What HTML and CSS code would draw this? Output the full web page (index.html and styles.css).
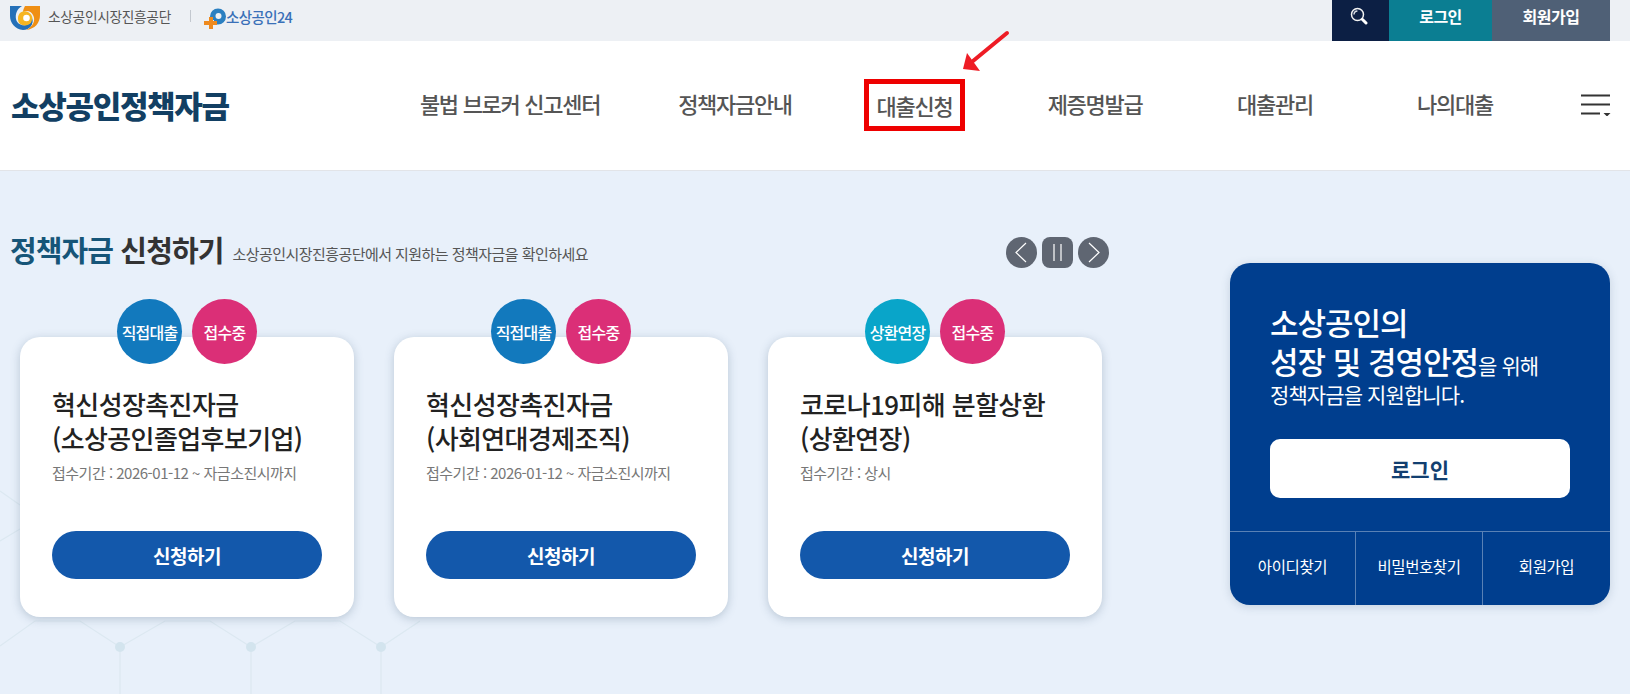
FILE: index.html
```html
<!DOCTYPE html>
<html lang="ko">
<head>
<meta charset="utf-8">
<title>소상공인정책자금</title>
<link rel="stylesheet" href="styles.css">
</head>
<body>
<div class="topbar">
  <div class="org">
    <svg class="kosme" viewBox="0 0 30 24" width="30" height="24">
      <path d="M0 0H12C7 3 5 8 6 13C7 18 12 20 16 19C20 18 22 15 22 12C24 18 20 24 13 24C5 23 0 17 0 10Z" fill="#2470b8"/>
      <path d="M15 0H30V9C30 17 25 23 16 24C23 21 26 14 23 9C21 5 17 4 13 6C13 4 14 2 15 0Z" fill="#ef8f14"/>
      <path d="M8 12C8 7 13 4 18 6C22 8 24 13 21 17C18 20 13 20 10 18C8 16 8 14 8 12Z" fill="#f6b521"/>
      <path d="M14 20C18 21 22 18 22 13C23 16 22 20 18 22C16 23 14 22 14 20Z" fill="#2470b8"/>
      <circle cx="16.500" cy="12" r="3.300" fill="#fff"/>
    </svg>
    <span class="org-name">소상공인시장진흥공단</span>
    <span class="org-sep"></span>
    <svg class="p24" viewBox="0 0 22 22" width="22" height="22">
      <path d="M6 10V8.500A8 8 0 1 1 14 16.500H10V12H6Z" fill="#2a7fc1"/>
      <circle cx="14.500" cy="8" r="3" fill="#edf0f4"/>
      <path d="M5 9h4v4h4v4H9v4H5v-4H0v-4h5z" fill="#ee8a1e"/>
    </svg>
    <span class="p24-name">소상공인24</span>
  </div>
  <div class="util">
    <a class="util-search">
      <svg viewBox="0 0 18 18" width="18" height="18">
        <circle cx="7.500" cy="7.500" r="6" fill="none" stroke="#f2f2f2" stroke-width="1.500"/>
        <path d="M12.500 12.500l3.500 3.500" stroke="#fff" stroke-width="3" stroke-linecap="round"/>
        <path d="M4 7.500a3.600 3.600 0 0 1 3.400-3.500" fill="none" stroke="#d8dce4" stroke-width="1.500"/>
      </svg>
    </a>
    <a class="util-login">로그인</a>
    <a class="util-join">회원가입</a>
  </div>
</div>

<header class="header">
  <div class="brand">소상공인정책자금</div>
  <nav class="gnb">
    <a class="gnb-item gnb-wide">불법 브로커 신고센터</a>
    <a class="gnb-item gnb-mid">정책자금안내</a>
    <a class="gnb-item gnb-mark"><span class="hl">대출신청</span></a>
    <a class="gnb-item">제증명발급</a>
    <a class="gnb-item">대출관리</a>
    <a class="gnb-item">나의대출</a>
  </nav>
  <svg class="burger" viewBox="0 0 30 22" width="30" height="22">
    <path d="M0 1.500H29M0 10.500H29M0 19.500H19" stroke="#333" stroke-width="2" fill="none"/>
    <path d="M22.500 19h7l-3.500 3.500z" fill="#333"/>
  </svg>
  <svg class="arrow" viewBox="0 0 60 50" width="60" height="50">
    <path d="M52 3L18 31" stroke="#ee1c25" stroke-width="4" stroke-linecap="round"/>
    <path d="M8 39L12 23L25 41Z" fill="#ee1c25"/>
  </svg>
</header>

<main class="main">
  <svg class="pattern" viewBox="0 0 420 223" width="420" height="223">
    <g fill="none" stroke="#dce8f1" stroke-width="1.200">
      <path d="M0 175L35 150H80L120 176L165 150H210L251 176L295 150H340L381 176L420 150"/>
      <path d="M120 176V223M251 176V223M381 176V223"/>
      <path d="M0 20L20 34M0 70L20 58"/>
    </g>
    <g fill="#d3e4ee">
      <circle cx="120" cy="176" r="5"/><circle cx="251" cy="176" r="5"/><circle cx="381" cy="176" r="5"/>
    </g>
  </svg>
  <section class="funds">
    <div class="funds-head">
      <h2 class="funds-title"><span class="accent">정책자금</span> 신청하기</h2>
      <p class="funds-sub">소상공인시장진흥공단에서 지원하는 정책자금을 확인하세요</p>
      <div class="controls">
        <button class="ctl ctl-round"><svg viewBox="0 0 31 31" width="31" height="31"><path d="M20 6L10 15.500L20 25" fill="none" stroke="#fff" stroke-width="1.200"/></svg></button>
        <button class="ctl ctl-square"><svg viewBox="0 0 31 31" width="31" height="31"><path d="M12 7V24M19 7V24" fill="none" stroke="#fff" stroke-width="1.200"/></svg></button>
        <button class="ctl ctl-round"><svg viewBox="0 0 31 31" width="31" height="31"><path d="M11 6L21 15.500L11 25" fill="none" stroke="#fff" stroke-width="1.200"/></svg></button>
      </div>
    </div>
    <div class="cards">
      <article class="card">
        <div class="badges"><span class="badge badge-direct">직접대출</span><span class="badge badge-open">접수중</span></div>
        <h3 class="card-title">혁신성장촉진자금<br>(소상공인졸업후보기업)</h3>
        <p class="card-date">접수기간 : 2026-01-12 ~ 자금소진시까지</p>
        <a class="card-btn">신청하기</a>
      </article>
      <article class="card">
        <div class="badges"><span class="badge badge-direct">직접대출</span><span class="badge badge-open">접수중</span></div>
        <h3 class="card-title">혁신성장촉진자금<br>(사회연대경제조직)</h3>
        <p class="card-date">접수기간 : 2026-01-12 ~ 자금소진시까지</p>
        <a class="card-btn">신청하기</a>
      </article>
      <article class="card">
        <div class="badges"><span class="badge badge-repay">상환연장</span><span class="badge badge-open">접수중</span></div>
        <h3 class="card-title">코로나19피해 분할상환<br>(상환연장)</h3>
        <p class="card-date">접수기간 : 상시</p>
        <a class="card-btn">신청하기</a>
      </article>
    </div>
  </section>
  <aside class="panel">
    <div class="panel-body">
      <p class="panel-text">
        <span class="panel-l1">소상공인의</span>
        <span class="panel-l2"><strong>성장 및 경영안정</strong>을 위해</span>
        <span class="panel-l3">정책자금을 지원합니다.</span>
      </p>
      <a class="panel-login">로그인</a>
    </div>
    <div class="panel-links">
      <a class="panel-link">아이디찾기</a>
      <a class="panel-link">비밀번호찾기</a>
      <a class="panel-link">회원가입</a>
    </div>
  </aside>
</main>
</body>
</html>
```

FILE: styles.css
```css
* { box-sizing: border-box; }
html, body { margin: 0; padding: 0; }
body {
  width: 1630px;
  height: 694px;
  overflow: hidden;
  background: #e8f0fa;
  font-family: "Noto Sans CJK KR", "Noto Sans", sans-serif;
  color: #333;
}
h2, h3, p { margin: 0; }

.topbar {
  height: 41px;
  background: #edf0f4;
  display: flex;
  justify-content: space-between;
  padding: 0 20px 0 10px;
}
.org { display: flex; align-items: center; padding-bottom: 9px; }
.kosme { margin-top: 3px; }
.org-name { margin-left: 8px; font-size: 13.7px; letter-spacing: -0.3px; color: #555; }
.org-sep { width: 1px; height: 12px; background: #c3c8cf; margin: 0 13px 0 19px; }
.p24-name { font-size: 14.5px; letter-spacing: -0.6px; color: #3a70b8; font-weight: 500; }
.p24 { margin-top: 5px; }
.util { display: flex; color: #fff; font-size: 16px; font-weight: 700; letter-spacing: -0.5px; }
.util a { display: flex; align-items: center; justify-content: center; padding-bottom: 10px; }
.util a.util-search { width: 57px; background: #0c1f44; padding: 0 4px 9px 0; }
.util-login { width: 103px; background: #0b7e92; }
.util-join { width: 118px; background: #4f6076; }

.header {
  position: relative;
  height: 130px;
  background: #fff;
  border-bottom: 1px solid #e2e4e8;
  display: flex;
  align-items: center;
  padding-left: 11px;
}
.brand {
  width: 387px;
  font-size: 31px;
  font-weight: 900;
  letter-spacing: -1.3px;
  color: #123f63;
  padding-bottom: 3px;
}
.gnb { display: flex; height: 100%; }
.gnb-item {
  width: 180px;
  display: flex;
  align-items: center;
  justify-content: center;
  font-size: 22px;
  font-weight: 500;
  letter-spacing: -1.3px;
  color: #555;
  white-space: nowrap;
  padding-bottom: 5px;
}
.gnb-wide { width: 224px; }
.gnb-mid { width: 203px; padding-left: 23px; }
.gnb-mark { padding-bottom: 2px; }
.hl {
  width: 101px;
  height: 52px;
  border: 5px solid #ee0000;
  display: flex;
  align-items: center;
  justify-content: center;
  margin-left: -1px;
}
.burger { margin-left: 36px; margin-top: -2px; }
.arrow { position: absolute; left: 955px; top: -11px; }

.main { position: relative; display: flex; height: 523px; }
.pattern { position: absolute; left: 0; top: 300px; }
.funds { position: relative; width: 1230px; }
.funds-head {
  display: flex;
  align-items: center;
  height: 40px;
  margin-top: 58px;
  padding: 0 121px 0 10px;
}
.funds-title {
  font-size: 29px;
  font-weight: 700;
  letter-spacing: -0.9px;
  color: #333;
  white-space: nowrap;
}
.accent { color: #165578; }
.funds-sub {
  margin-left: 9px;
  padding-top: 8px;
  font-size: 15px;
  letter-spacing: -0.55px;
  color: #555;
  white-space: nowrap;
}
.controls { display: flex; gap: 5px; margin: 6px 0 0 auto; }
.ctl {
  width: 31px;
  height: 31px;
  padding: 0;
  border: 0;
  background: #5f6672;
  display: block;
}
.ctl-round { border-radius: 50%; }
.ctl-square { border-radius: 8px; }

.cards { display: flex; gap: 40px; margin: 68px 0 0 20px; }
.card {
  position: relative;
  width: 334px;
  height: 280px;
  background: #fff;
  border-radius: 20px;
  box-shadow: 0 2px 10px rgba(60, 90, 120, 0.28);
  padding: 50px 32px 0;
}
.badges {
  position: absolute;
  top: -38px;
  left: 97px;
  display: flex;
  gap: 10px;
}
.badge {
  width: 65px;
  height: 65px;
  border-radius: 50%;
  color: #fff;
  font-size: 16px;
  letter-spacing: -0.8px;
  font-weight: 500;
  display: flex;
  align-items: center;
  justify-content: center;
  white-space: nowrap;
}
.badge-direct { background: #1279bd; }
.badge-open { background: #db2f77; }
.badge-repay { background: #09a5c9; }
.card-title {
  font-size: 26px;
  font-weight: 500;
  line-height: 34px;
  letter-spacing: -0.6px;
  color: #222;
  white-space: nowrap;
}
.card-date {
  margin-top: 7px;
  height: 69px;
  font-size: 15px;
  line-height: 22px;
  letter-spacing: -0.5px;
  color: #777;
  white-space: nowrap;
}
.card-btn {
  display: flex;
  align-items: center;
  justify-content: center;
  width: 270px;
  height: 48px;
  border-radius: 24px;
  background: #1358ab;
  color: #fff;
  font-size: 19px;
  font-weight: 700;
  letter-spacing: -0.5px;
}

.panel {
  width: 380px;
  height: 342px;
  margin-top: 92px;
  background: #003e8e;
  border-radius: 20px;
  box-shadow: 0 2px 10px rgba(60, 90, 120, 0.2);
  color: #fff;
  display: flex;
  flex-direction: column;
  overflow: hidden;
}
.panel-body { height: 268px; padding: 40px 40px 0; }
.panel-text { white-space: nowrap; font-size: 21px; letter-spacing: -0.9px; }
.panel-text span { display: block; }
.panel-text strong { font-size: 31px; font-weight: 500; letter-spacing: -1px; }
.panel-l1 { font-size: 31px; font-weight: 500; letter-spacing: -1px; line-height: 38px; }
.panel-l2 { height: 39px; line-height: 39px; }
.panel-l3 { line-height: 28px; }
.panel-login {
  display: flex;
  align-items: center;
  justify-content: center;
  width: 300px;
  height: 59px;
  margin-top: 31px;
  border-radius: 10px;
  background: #fff;
  color: #123f70;
  font-size: 21px;
  font-weight: 700;
}
.panel-links {
  flex: 1;
  display: grid;
  grid-template-columns: 125px 127px 128px;
  border-top: 1px solid rgba(255, 255, 255, 0.35);
}
.panel-link {
  display: flex;
  align-items: center;
  justify-content: center;
  font-size: 15.5px;
  letter-spacing: -0.4px;
  border-left: 1px solid rgba(255, 255, 255, 0.35);
  padding-bottom: 6px;
}
.panel-link:first-child { border-left: 0; }
```
